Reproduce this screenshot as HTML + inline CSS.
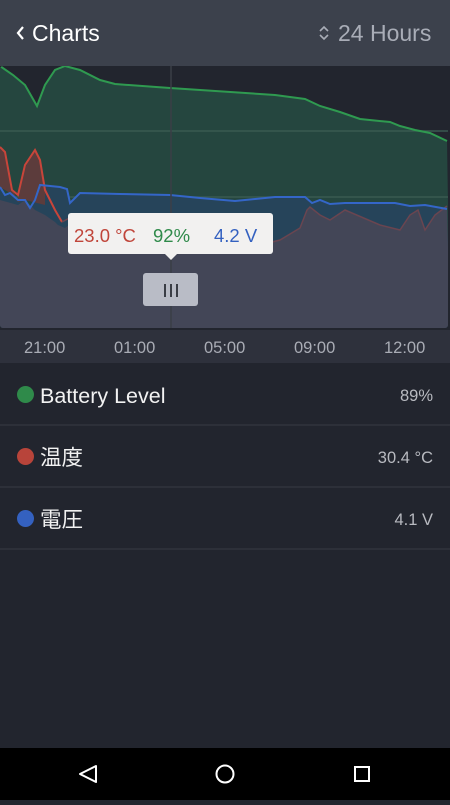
<!DOCTYPE html>
<html><head><meta charset="utf-8"><style>
*{margin:0;padding:0;box-sizing:border-box}
body{width:450px;height:800px;background:#22252e;font-family:"Liberation Sans","Noto Sans CJK JP",sans-serif;position:relative;overflow:hidden}
.hdr{position:absolute;left:0;top:0;width:450px;height:66px;background:#3c414c}
.t{position:absolute;white-space:nowrap}
.row{position:absolute;left:0;width:450px;height:62px;border-bottom:2px solid #2d3039}
.dot{position:absolute;left:17px;top:22px;width:17px;height:17px;border-radius:50%}
.lab{position:absolute;left:40px;top:2px;height:60px;line-height:60px;font-size:21.5px;color:#f2f2f2}
.val{position:absolute;right:17px;top:2px;height:60px;line-height:60px;font-size:16.5px;color:#b8bac0}
</style></head><body>
<div class="hdr">
<svg style="position:absolute;left:16px;top:25px" width="10" height="16"><path d="M7 2 L2 8 L7 14" stroke="#fff" stroke-width="2.2" fill="none"/></svg>
<div class="t" style="left:32px;top:20px;font-size:23px;color:#fff">Charts</div>
<svg style="position:absolute;left:318px;top:25px" width="12" height="16"><path d="M2 6 L6 2 L10 6 M2 10 L6 14 L10 10" stroke="#a9adb7" stroke-width="1.6" fill="none"/></svg>
<div class="t" style="left:338px;top:20px;font-size:23px;color:#a9adb7">24 Hours</div>
</div>
<svg style="position:absolute;left:0;top:66px" width="450" height="264" viewBox="0 66 450 264">
<defs><clipPath id="c"><rect x="0" y="66" width="448" height="262" rx="3"/></clipPath></defs>
<g clip-path="url(#c)">
<rect x="0" y="66" width="450" height="264" fill="#22252e"/>
<path d="M0,66 13,75 25,85 37,106 45,85 55,70 65,66 80,70 100,80 115,84 170,88 275,95 305,99 320,106 340,112 360,119 390,122 400,126 415,130 430,133 447,141 L450,330 0,330Z" fill="#25463f"/>
<line x1="0" y1="131" x2="450" y2="131" stroke="#3a5a50" stroke-width="1.5"/>
<line x1="0" y1="197" x2="450" y2="197" stroke="#3a5a50" stroke-width="1.5"/>
<path d="M0,187 5,195 10,193 18,200 25,200 30,208 35,200 40,185 60,187 67,189 70,203 80,193 120,194 170,195 200,198 235,201 275,197 305,197 312,203 320,200 330,204 345,203 395,203 410,206 425,205 447,209 L450,330 0,330Z" fill="#26445a"/>
<path d="M0,200 18,205 25,200 35,210 45,215 55,222 58,225 65,228 70,224 75,215 80,213 85,222 90,240 100,245 260,245 280,240 300,228 307,210 310,207 320,215 330,220 345,210 380,225 400,230 410,215 418,210 425,230 435,215 447,206 L450,330 0,330Z" fill="#434657"/>
<path d="M0,147 5,152 12,190 18,200 22,178 28,160 35,150 40,162 45,190 45,205 25,200 18,202 10,193 0,187Z" fill="#5c3c3c"/>
<path d="M0,147 5,152 12,190 18,195 25,165 35,150 40,160 45,190 50,200 55,210 62,222" stroke="#c8453a" stroke-width="2" fill="none"/>
<path d="M62,222 75,215 85,222 90,240 100,245 M260,245 280,240 300,228 307,210 310,207 320,215 330,220 345,210 380,225 400,230 410,215 418,210 425,230 435,215 447,206" stroke="#6a4550" stroke-width="1.5" fill="none"/>
<path d="M0,66 13,75 25,85 37,106 45,85 55,70 65,66 80,70 100,80 115,84 170,88 275,95 305,99 320,106 340,112 360,119 390,122 400,126 415,130 430,133 447,141" stroke="#2f9a50" stroke-width="2" fill="none"/>
<path d="M0,187 5,195 10,193 18,200 25,200 30,208 35,200 40,185 60,187 67,189 70,203 80,193 120,194 170,195 200,198 235,201 275,197 305,197 312,203 320,200 330,204 345,203 395,203 410,206 425,205 447,209" stroke="#3466c8" stroke-width="2" fill="none"/>
<line x1="171" y1="66" x2="171" y2="330" stroke="#3b3e47" stroke-width="1.5"/>
</g>
<rect x="68" y="213" width="205" height="41" rx="3" fill="#f2f1f0"/>
<path d="M165,254 171,260 177,254Z" fill="#f2f1f0"/>
<text x="74" y="242" font-size="18.5" fill="#c0453a" font-family="Liberation Sans">23.0 °C</text>
<text x="153" y="242" font-size="18.5" fill="#2f8a4a" font-family="Liberation Sans">92%</text>
<text x="214" y="242" font-size="18.5" fill="#3461c0" font-family="Liberation Sans">4.2 V</text>
<rect x="143" y="273" width="55" height="33" rx="3" fill="#b9bcc6"/>
<path d="M165,284v13M171,284v13M177,284v13" stroke="#3a3d45" stroke-width="2"/>
</svg>
<div style="position:absolute;left:0;top:330px;width:450px;height:33px;background:#2e313c"></div>
<div class="t" style="left:24px;top:339px;font-size:16.5px;color:#a9acb5">21:00</div>
<div class="t" style="left:114px;top:339px;font-size:16.5px;color:#a9acb5">01:00</div>
<div class="t" style="left:204px;top:339px;font-size:16.5px;color:#a9acb5">05:00</div>
<div class="t" style="left:294px;top:339px;font-size:16.5px;color:#a9acb5">09:00</div>
<div class="t" style="left:384px;top:339px;font-size:16.5px;color:#a9acb5">12:00</div>
<div class="row" style="top:364px"><div class="dot" style="background:#2f8a4a"></div><div class="lab">Battery Level</div><div class="val">89%</div></div>
<div class="row" style="top:426px"><div class="dot" style="background:#b8443a"></div><div class="lab">温度</div><div class="val">30.4 °C</div></div>
<div class="row" style="top:488px"><div class="dot" style="background:#3461c0"></div><div class="lab">電圧</div><div class="val">4.1 V</div></div>
<div style="position:absolute;left:0;top:748px;width:450px;height:52px;background:#000">
<svg width="450" height="52"><path d="M96,18 L80,26 L96,34Z" stroke="#fff" stroke-width="2" fill="none" stroke-linejoin="round"/><circle cx="225" cy="26" r="8.5" stroke="#fff" stroke-width="2" fill="none"/><rect x="355" y="19" width="14" height="14" stroke="#fff" stroke-width="2" fill="none"/></svg>
</div>
</body></html>
